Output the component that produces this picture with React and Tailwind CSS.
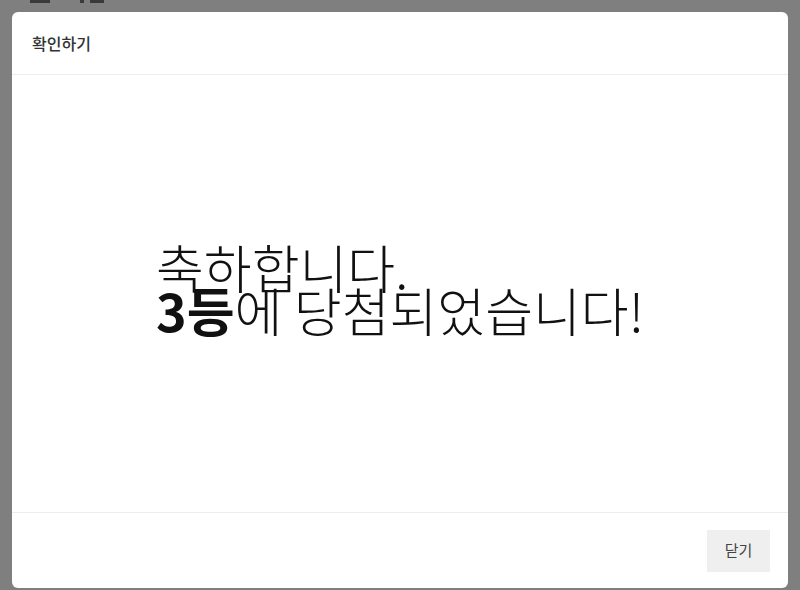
export default function App() {
  const kr = { fontFamily: '"Noto Sans CJK KR", "Noto Sans", sans-serif' };

  return (
    <div
      className="w-[800px] h-[590px] bg-[#7f7f7f] px-[12px] pt-[12px] overflow-hidden relative"
      style={kr}
    >
      {/* bits of the page behind the overlay */}
      <div className="absolute top-0 left-[30px] w-[20px] h-[3px] bg-[#3a3a3a]" />
      <div className="absolute top-0 left-[80px] w-[4px] h-[3px] bg-[#3a3a3a]" />
      <div className="absolute top-0 left-[90px] w-[14px] h-[3px] bg-[#3a3a3a]" />

      <div className="relative flex flex-col h-[576px] bg-white rounded-md">
        <div className="h-[63px] flex items-center px-5 border-b border-[#ededed] shrink-0">
          <span className="text-[16px] text-[#333] font-medium">확인하기</span>
        </div>

        <div className="flex-1 flex items-center justify-center pb-[12px]">
          <div className="text-left text-[52px] leading-[43px] text-[#111] font-light">
            <div>축하합니다.</div>
            <div>
              <span className="font-bold">3등</span>에 당첨되었습니다!
            </div>
          </div>
        </div>

        <div className="h-[76px] flex items-center justify-end pr-[18px] border-t border-[#ededed] shrink-0">
          <button className="w-[63px] h-[42px] bg-[#efefef] text-[15px] text-[#444]">
            닫기
          </button>
        </div>
      </div>
    </div>
  );
}
